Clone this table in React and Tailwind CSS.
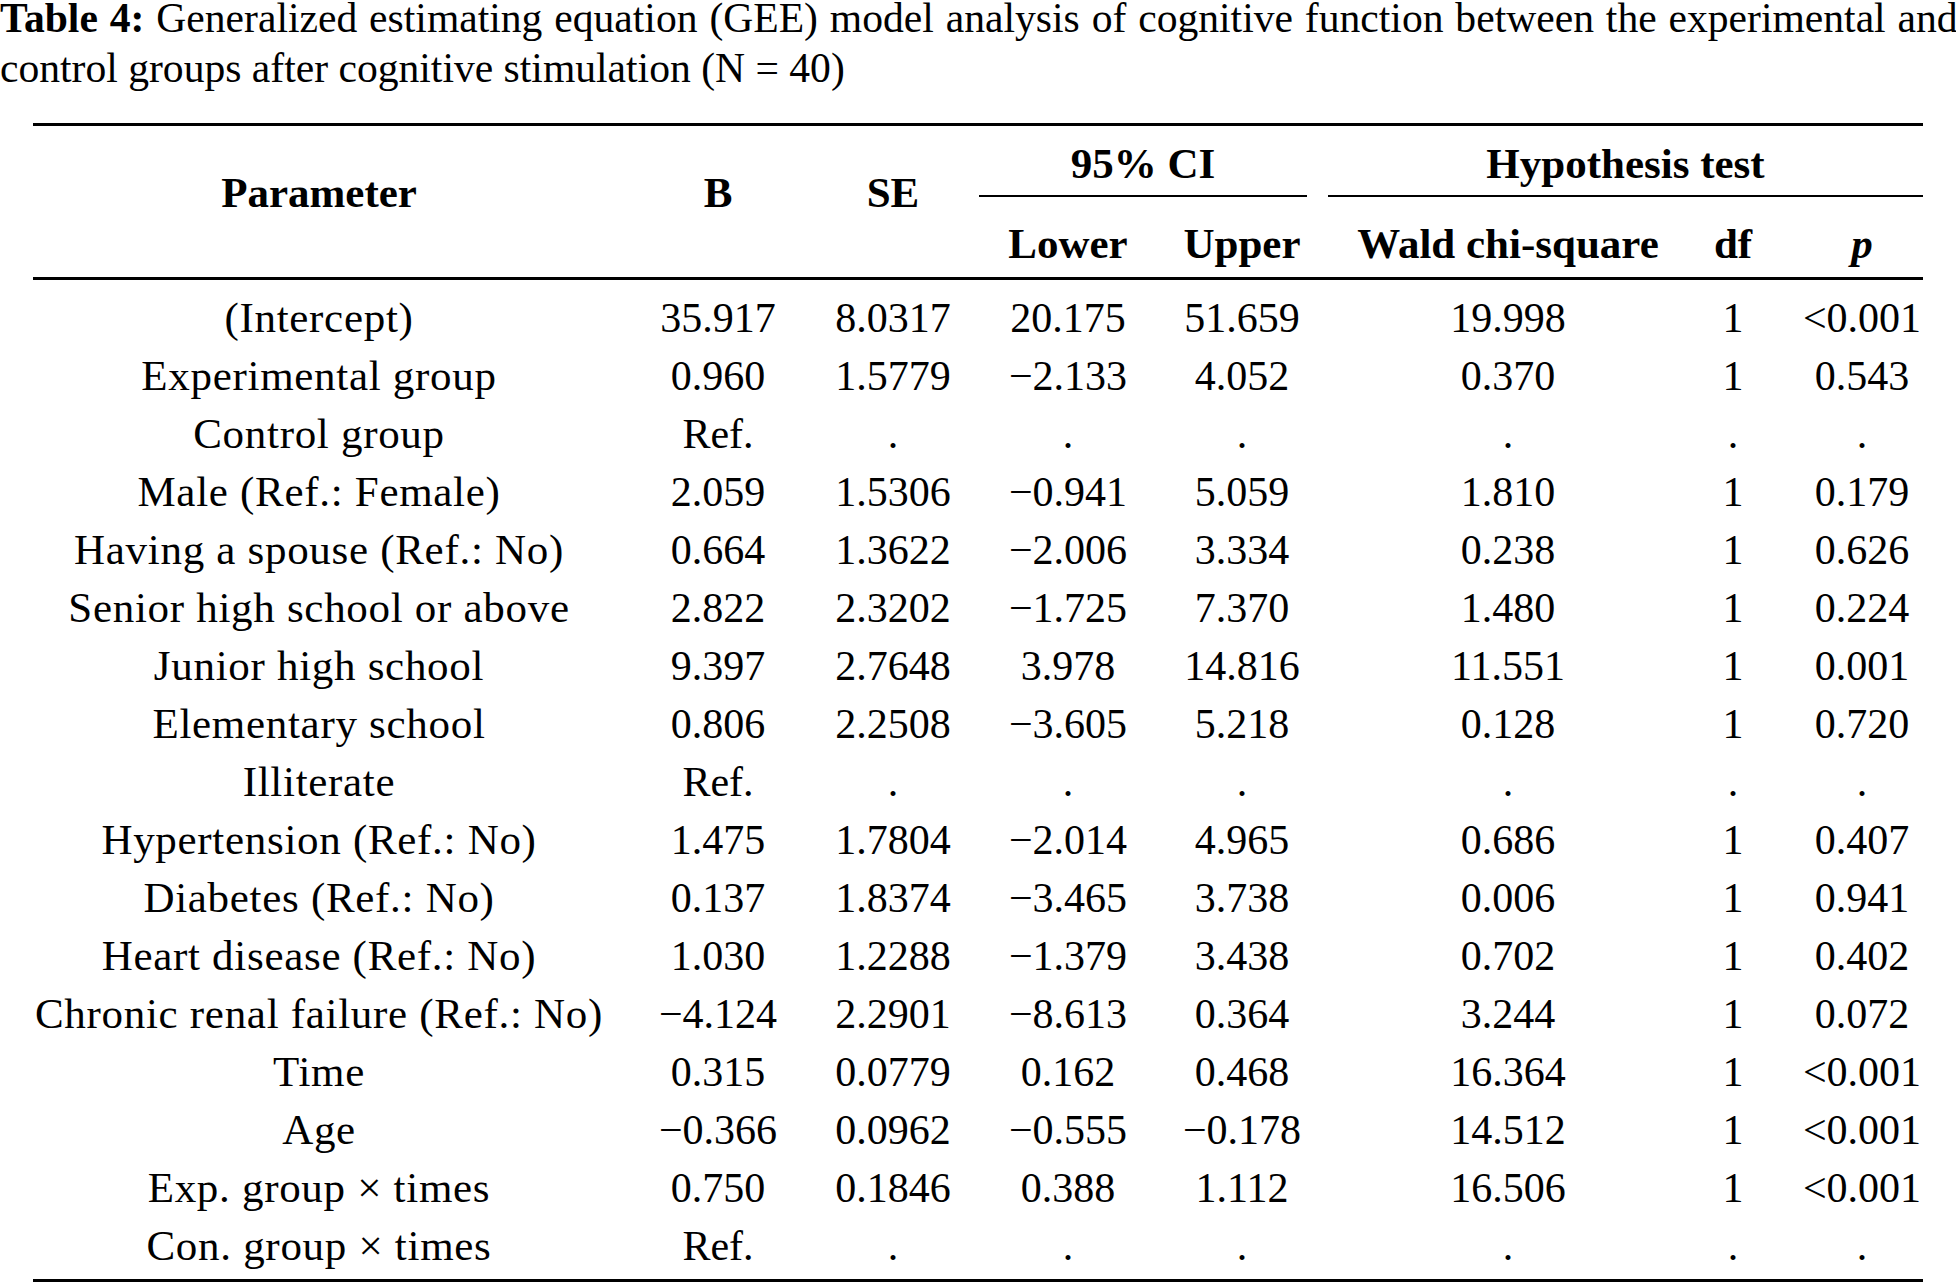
import React from 'react'

const rows = [
  ['(Intercept)', '35.917', '8.0317', '20.175', '51.659', '19.998', '1', '<0.001'],
  ['Experimental group', '0.960', '1.5779', '−2.133', '4.052', '0.370', '1', '0.543'],
  ['Control group', 'Ref.', '.', '.', '.', '.', '.', '.'],
  ['Male (Ref.: Female)', '2.059', '1.5306', '−0.941', '5.059', '1.810', '1', '0.179'],
  ['Having a spouse (Ref.: No)', '0.664', '1.3622', '−2.006', '3.334', '0.238', '1', '0.626'],
  ['Senior high school or above', '2.822', '2.3202', '−1.725', '7.370', '1.480', '1', '0.224'],
  ['Junior high school', '9.397', '2.7648', '3.978', '14.816', '11.551', '1', '0.001'],
  ['Elementary school', '0.806', '2.2508', '−3.605', '5.218', '0.128', '1', '0.720'],
  ['Illiterate', 'Ref.', '.', '.', '.', '.', '.', '.'],
  ['Hypertension (Ref.: No)', '1.475', '1.7804', '−2.014', '4.965', '0.686', '1', '0.407'],
  ['Diabetes (Ref.: No)', '0.137', '1.8374', '−3.465', '3.738', '0.006', '1', '0.941'],
  ['Heart disease (Ref.: No)', '1.030', '1.2288', '−1.379', '3.438', '0.702', '1', '0.402'],
  ['Chronic renal failure (Ref.: No)', '−4.124', '2.2901', '−8.613', '0.364', '3.244', '1', '0.072'],
  ['Time', '0.315', '0.0779', '0.162', '0.468', '16.364', '1', '<0.001'],
  ['Age', '−0.366', '0.0962', '−0.555', '−0.178', '14.512', '1', '<0.001'],
  ['Exp. group × times', '0.750', '0.1846', '0.388', '1.112', '16.506', '1', '<0.001'],
  ['Con. group × times', 'Ref.', '.', '.', '.', '.', '.', '.'],
]

const cols = 'grid grid-cols-[620px_130px_220px_130px_218px_314px_136px_122px]'

export default function App() {
  return (
    <div className="w-[1956px] h-[1284px] overflow-hidden bg-white text-black font-['Liberation_Serif',serif]">
      <div className="text-[41.6px] leading-[36px] whitespace-nowrap">
        <p className="[word-spacing:1.5px]">
          <span className="font-bold">Table 4:</span> Generalized estimating equation (GEE) model analysis of cognitive function between the experimental and
        </p>
        <p className="mt-[14px]">control groups after cognitive stimulation (N = 40)</p>
      </div>

      <div className="ml-[33px] mt-[37px] w-[1890px] border-t-[3px] border-b-[3px] border-black">
        {/* header */}
        <div className={`${cols} grid-rows-[71px_80px] border-b-[3px] border-black font-bold text-[43px] leading-[48px]`}>
          <div className="row-span-2 pr-[48px] pt-[43px] text-center">Parameter</div>
          <div className="row-span-2 pt-[43px] text-center">B</div>
          <div className="row-span-2 pt-[43px] text-center">SE</div>
          <div className="col-span-2 ml-[-24px] mr-[44px] border-b-2 border-black flex items-end justify-center pb-[7px]">95% CI</div>
          <div className="col-span-3 ml-[-23px] border-b-2 border-black flex items-end justify-center pb-[7px]">Hypothesis test</div>
          <div className="flex items-end justify-center pb-[9px]">Lower</div>
          <div className="flex items-end justify-center pb-[9px]">Upper</div>
          <div className="flex items-end justify-center pb-[9px]">Wald chi-square</div>
          <div className="flex items-end justify-center pb-[9px]">df</div>
          <div className="flex items-end justify-center pb-[9px] italic">p</div>
        </div>

        {/* body */}
        <div className="pt-[9px] pb-[4px]">
          {rows.map((r, i) => (
            <div key={i} className={`${cols} h-[58px] text-[42px] leading-[58px]`}>
              <div className="pr-[48px] flex justify-center whitespace-nowrap text-[43px] tracking-[0.7px]">{r[0]}</div>
              {r.slice(1).map((v, j) => (
                <div key={j} className="flex justify-center whitespace-nowrap">{v}</div>
              ))}
            </div>
          ))}
        </div>
      </div>
    </div>
  )
}
